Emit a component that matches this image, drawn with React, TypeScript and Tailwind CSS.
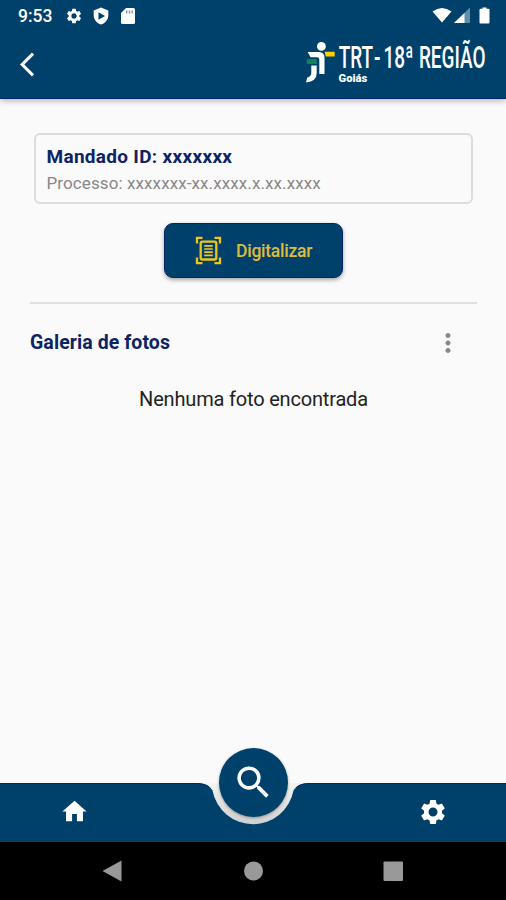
import { MdArrowBackIos, MdHome, MdMoreVert, MdSearch, MdSettings } from "react-icons/md";

function StatusBar() {
  return (
    <div className="flex h-8 items-center justify-between pl-[18px] pr-[15px]">
      <div className="flex items-center">
        <span className="w-[47px] text-[17.5px] font-medium leading-8">9:53</span>
        <MdSettings size={18} />
        <svg className="ml-[10px]" width="16" height="18" viewBox="0 0 16 18">
          <path fill="#fff" d="M8 0.5 15.3 3.4V8.5C15.3 12.6 12.2 16.2 8 17.6 3.8 16.2.7 12.6.7 8.5V3.4z" />
          <path fill="#00416b" d="M5.5 5.2 12 9l-6.5 3.8z" />
        </svg>
        <svg className="ml-3" width="14" height="16" viewBox="0 0 14 16">
          <path fill="#fff" d="M5 0h7.5Q14 0 14 1.5v13Q14 16 12.5 16h-11Q0 16 0 14.5V5z" />
          <path fill="#7899ae" d="M5 2.5h1.4v3H5zM7.8 2.5h1.4v3H7.8zM10.5 2.5h1.4v3h-1.4z" />
        </svg>
      </div>
      <svg width="59" height="18" viewBox="0 0 59 18">
        <path fill="#fff" d="M0.5 4.5Q10 -2.5 19.5 4.5L10 15.5z" />
        <path fill="#628da6" d="M38 0.5v15.5H22z" />
        <path fill="#fff" d="M32.5 6v10H22z" />
        <path fill="#fff" d="M48.5 1.8h2V0.5h4v1.3h2q1 0 1 1V15.5q0 1-1 1h-8q-1 0-1-1V2.8q0-1 1-1z" />
      </svg>
    </div>
  );
}

function Logo() {
  return (
    <svg width="190" height="50" viewBox="0 0 190 50" className="font-['Roboto',sans-serif]">
      <circle cx="19.4" cy="8.4" r="4.4" fill="#fff" />
      <path d="M5.7 14h11.3q5.5 0 5.5 6V36h-5.2V21.5q0-2.3-2.3-2.3H8.5z" fill="#fff" />
      <path d="M22.7 13.7h10v4.7h-9z" fill="#ffd000" />
      <path d="M4.7 21.2h10v4.7h-10z" fill="#16835c" />
      <path d="M9.3 27.5h5.4v7.5q0 8.5-10.7 9.5l1.2-5q4.1-.8 4.1-5z" fill="#fff" />
      <g fill="#fff">
        {/* condensed lettering */}
        <text transform="translate(36.7 30.3) scale(.622 1)" fontSize="30.5" fontWeight="500">
          TRT<tspan dx="1.5">-</tspan><tspan dx="5">18ª</tspan><tspan dx="1"> REGIÃO</tspan>
        </text>
        <text x="36.5" y="43.5" fontSize="11.2" fontWeight="900">Goiás</text>
      </g>
    </svg>
  );
}

function ScanIcon() {
  return (
    <svg width="28" height="29" viewBox="0 0 28 29" fill="none" stroke="#efc51b" strokeWidth="2.3">
      <path d="M3 7.5V1.9H8.5M20.5 1.9H26V7.5M26 21.5v5.7H20.5M8.5 27.2H3V21.5" />
      <rect x="6.7" y="5.6" width="15.6" height="17.9" rx="1.8" />
      <path d="M10.2 9.8h8.6M10.2 13h8.6M10.2 16.2h8.6M10.2 19.4h8.6" strokeWidth="1.7" />
    </svg>
  );
}

function BottomNav() {
  return (
    <nav className="relative h-[59px] text-white">
      <svg className="absolute inset-x-0 -top-4" width="506" height="75" viewBox="0 0 506 75">
        <defs>
          <linearGradient id="notch" x1="0" y1="0" x2="0" y2="1">
            <stop offset="0" stopColor="#f4f4f4" />
            <stop offset="1" stopColor="#cfcfcf" />
          </linearGradient>
        </defs>
        <path d="M200 16h106v42H200z" fill="url(#notch)" />
        <path
          d="M0 16h196q13 0 16.5 7.5a41.2 41.2 0 0 0 81 0q3.5-7.5 16.5-7.5h196v59H0z"
          fill="#00416b"
        />
        <path d="M0 16.5h196q9 0 13 3.5M297 20q4-3.5 13-3.5h196" fill="none" stroke="#052365" />
      </svg>
      <button className="absolute left-[218.5px] -top-[35px] flex size-[69px] items-center justify-center rounded-full bg-[#00416b] shadow-[0_1px_3px_rgba(0,0,0,0.35)]">
        <MdSearch size={43} />
      </button>
      <div className="relative flex h-full items-center justify-between pb-0.5 pl-[60px] pr-[58px]">
        <MdHome size={29} />
        <MdSettings size={30} />
      </div>
    </nav>
  );
}

export default function App() {
  return (
    <div className="flex h-[900px] w-[506px] flex-col overflow-hidden bg-[#fafafa] font-['Roboto',sans-serif]">
      <header className="relative h-[99px] border-b border-[#052365] bg-[#00416b] text-white shadow-[0_2px_6px_rgba(0,0,0,0.28)]">
        <StatusBar />
        <div className="flex items-start justify-between pl-5 pr-[14px] pt-[6px]">
          <MdArrowBackIos size={29} className="mt-3" />
          <Logo />
        </div>
      </header>

      <main className="flex flex-1 flex-col pl-[30px] pr-[29px] pt-[34px]">
        <div className="mx-1 h-[71px] rounded-md border-2 border-[#dcdcdc] pl-[10.5px] pt-[9px]">
          <p className="text-[19px] font-bold leading-[25px] tracking-[0.3px] text-[#0c2464]">Mandado ID: xxxxxxx</p>
          <p className="text-[17px] leading-[28px] tracking-[0.1px] text-[#888]">Processo: xxxxxxx-xx.xxxx.x.xx.xxxx</p>
        </div>

        <button className="mt-[19px] flex h-[55px] w-[179px] items-center gap-[14px] self-center rounded-[9px] border border-[#052365] bg-[#00416b] pl-[29px] shadow-[0_2px_4px_rgba(0,0,0,0.35)]">
          <ScanIcon />
          <span className="pt-0.5 text-[17.5px] font-medium tracking-[-0.25px] text-[#e0bb3a]">Digitalizar</span>
        </button>

        <div className="mt-6 border-t-2 border-[#e0e0e0]" />

        <div className="mt-6 flex h-[30px] items-center justify-between pr-[14px]">
          <h2 className="text-[19.5px] font-bold tracking-[0.08px] text-[#0c2464]">Galeria de fotos</h2>
          <MdMoreVert size={30} className="text-[#888]" />
        </div>
        <p className="mt-[26px] text-center text-[20px] leading-[30px] tracking-[-0.18px] text-[#222]">Nenhuma foto encontrada</p>
      </main>

      <BottomNav />

      <footer className="flex h-[58px] bg-black">
        <svg width="506" height="58" viewBox="0 0 506 58" fill="#999">
          <path d="M102.5 29 121.5 18.5v21z" />
          <circle cx="253.5" cy="29" r="9.5" />
          <rect x="383.5" y="19.5" width="19.5" height="19.5" rx="1" />
        </svg>
      </footer>
    </div>
  );
}
